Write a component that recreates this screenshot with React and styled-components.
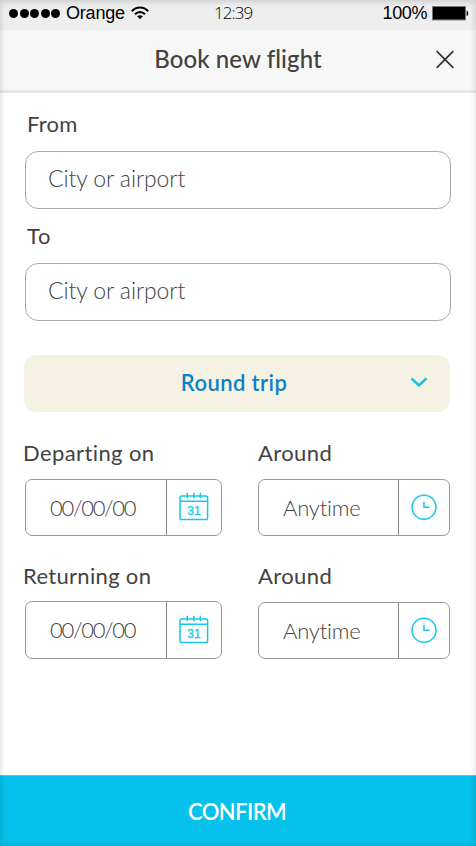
import React from "react";
import styled, { createGlobalStyle } from "styled-components";

const CalendarIcon = () => (
  <Icon width="30" height="30" viewBox="0 0 30 30">
    <rect x="1" y="4" width="27.6" height="23.6" rx="1.8" />
    <path d="M1 9.2h27.6M8.3 .8v5.4M14.8 .8v5.4M21.4 .8v5.4" />
    <IconText x="14.9" y="22.6">31</IconText>
  </Icon>
);

const ClockIcon = () => (
  <Icon width="26" height="26" viewBox="0 0 26 26">
    <circle cx="13" cy="13.3" r="12" />
    <path d="M13 7.7v5.5h5.4" />
  </Icon>
);

const WifiIcon = () => (
  <svg width="18" height="14" viewBox="0 0 18 14" fill="none" stroke="#000" strokeWidth="2">
    <path d="M.8 5.2C5.4 .2 12.6 .2 17.2 5.2" />
    <path d="M4 8.3c3-3.1 7-3.1 10 0" />
    <path d="M9 13.3l-2.9-3c1.8-1.5 4-1.5 5.8 0z" fill="#000" stroke="none" />
  </svg>
);

const BatteryIcon = () => (
  <svg width="37" height="15" viewBox="0 0 37 15">
    <rect x=".5" y=".5" width="33" height="13.4" fill="#000" stroke="#777" />
    <path d="M34.6 4.4c2.3 1 2.3 4.8 0 5.8z" fill="#000" />
  </svg>
);

const DateField = ({ label, spacing, fieldHeight }) => (
  <div>
    <Label $height={109 - fieldHeight} $spacing={spacing} $inset={-2}>{label}</Label>
    <SplitField $height={fieldHeight}>
      <SplitValue $spacing="-1.3px">00/00/00</SplitValue>
      <IconCell $width={55} aria-label="Open calendar">
        <CalendarIcon />
      </IconCell>
    </SplitField>
  </div>
);

const TimeField = () => (
  <div>
    <Label $height={52} $spacing="0.4px" $inset={0}>Around</Label>
    <SplitField $height={57}>
      <SplitValue $spacing="-0.2px">Anytime</SplitValue>
      <IconCell $width={51} aria-label="Choose time">
        <ClockIcon />
      </IconCell>
    </SplitField>
  </div>
);

const App = () => (
  <>
    <GlobalStyle />
    <Screen>
      <StatusBar>
        <Carrier>
          <Signal>
            {[0, 1, 2, 3, 4].map((i) => <Dot key={i} />)}
          </Signal>
          <CarrierName>Orange</CarrierName>
          <WifiIcon />
        </Carrier>
        <Time>12:39</Time>
        <Battery>
          <span>100%</span>
          <BatteryIcon />
        </Battery>
      </StatusBar>

      <Header>
        <Title>Book new flight</Title>
        <CloseButton aria-label="Close">
          <svg width="20" height="20" viewBox="0 0 20 20" stroke="#333" strokeWidth="1.7">
            <path d="M1.7 1.2l16.6 16.6M18.3 1.2L1.7 17.8" />
          </svg>
        </CloseButton>
      </Header>

      <Form>
        <Label $height={54} $spacing="0.2px" $inset={2}>From</Label>
        <Field>City or airport</Field>
        <Label $height={54} $spacing="0.8px" $inset={2}>To</Label>
        <Field>City or airport</Field>

        <TripSelect>
          <span>Round trip</span>
          <svg width="18" height="12" viewBox="0 0 18 12" fill="none" stroke="#05c3e8" strokeWidth="2.4">
            <path d="M1.5 2.3L9 9.3l7.5-7" />
          </svg>
        </TripSelect>

        <Schedule>
          <DateField label="Departing on" spacing="0.4px" fieldHeight={57} />
          <TimeField />
          <DateField label="Returning on" spacing="0.32px" fieldHeight={58} />
          <TimeField />
        </Schedule>
      </Form>

      <ConfirmButton>CONFIRM</ConfirmButton>
    </Screen>
  </>
);

export default App;

const GlobalStyle = createGlobalStyle`
  * {
    box-sizing: border-box;
  }

  body {
    margin: 0;
    background: #ffffff;
    font-family: Lato, "Open Sans", sans-serif;
    font-variant-ligatures: none;
    color: #424242;
  }

  button {
    font-family: inherit;
    border: none;
    padding: 0;
    background: none;
    cursor: pointer;
  }

  svg {
    display: block;
    flex-shrink: 0;
  }
`;

const Screen = styled.div`
  position: relative;
  display: flex;
  flex-direction: column;
  width: 476px;
  height: 846px;
  overflow: hidden;

  /* soft edge shade over the whole screen */
  &::after {
    content: "";
    position: absolute;
    inset: 0;
    pointer-events: none;
    box-shadow: inset 0 1px 6px rgba(0, 0, 0, 0.18);
  }
`;

const StatusBar = styled.div`
  display: grid;
  grid-template-columns: 205px 1fr auto;
  align-items: center;
  height: 30px;
  padding: 0 7px 4px 9px;
  background: #eeeeee;
  font-family: "Liberation Sans", Arial, sans-serif;
  font-size: 18px;
  line-height: 26px;
  color: #000000;
`;

const Carrier = styled.div`
  display: flex;
  align-items: center;
  gap: 6px;
`;

const CarrierName = styled.span`
  letter-spacing: -0.2px;
`;

const Signal = styled.div`
  display: flex;
  gap: 1.5px;
`;

const Dot = styled.i`
  width: 9px;
  height: 9px;
  border-radius: 50%;
  background: #000000;
`;

const Time = styled.span`
  font-family: "Open Sans", sans-serif;
  font-size: 17px;
  font-weight: 300;
  letter-spacing: -0.9px;
  color: #000000;
`;

const Battery = styled.div`
  display: flex;
  justify-content: flex-end;
  align-items: center;
  gap: 5px;
  letter-spacing: -0.4px;
`;

const Header = styled.header`
  display: grid;
  grid-template-columns: 44px 1fr 44px;
  align-items: center;
  height: 63px;
  padding: 0 9px 0 8px;
  background: #f7f7f7;
  border-bottom: 3px solid #e6e6e6;
`;

const Title = styled.h1`
  grid-column: 2;
  margin: 0;
  padding: 0 0 3px 1px;
  font-size: 24px;
  font-weight: 500;
  line-height: 30px;
  letter-spacing: 0.1px;
  text-align: center;
`;

const CloseButton = styled.button`
  display: flex;
  justify-content: center;
`;

const Form = styled.main`
  flex: 1;
  padding: 4px 25px 0;
`;

const Label = styled.div`
  height: ${(props) => props.$height}px;
  padding-left: ${(props) => Math.max(props.$inset, 0)}px;
  margin-left: ${(props) => Math.min(props.$inset, 0)}px;
  font-size: 22px;
  line-height: ${(props) => props.$height}px;
  letter-spacing: ${(props) => props.$spacing};
  white-space: nowrap;
`;

const Field = styled.div`
  height: 58px;
  padding-left: 22px;
  border: 1px solid #a9a9a9;
  border-radius: 13px;
  font-size: 23px;
  font-weight: 300;
  line-height: 53px;
  letter-spacing: -0.08px;
`;

const TripSelect = styled.button`
  display: grid;
  grid-template-columns: 62px 1fr 62px;
  align-items: center;
  justify-items: center;
  width: 426px;
  height: 57px;
  margin: 34px 0 15px -1px;
  padding-bottom: 3px;
  border-radius: 12px;
  background: #f6f2e3;
  font-size: 22px;
  font-weight: 600;
  color: #0a82c6;

  span {
    grid-column: 2;
    padding-right: 6px;
    letter-spacing: 0.4px;
  }
`;

const Schedule = styled.div`
  display: grid;
  grid-template-columns: 197px 192px;
  column-gap: 36px;
  row-gap: 14px;
`;

const SplitField = styled.div`
  display: flex;
  height: ${(props) => props.$height}px;
  border: 1px solid #999999;
  border-radius: 7px;
`;

const SplitValue = styled.div`
  flex: 1;
  padding-left: 24px;
  font-size: 22px;
  font-weight: 300;
  line-height: 56px;
  letter-spacing: ${(props) => props.$spacing};
`;

const IconCell = styled.button`
  display: flex;
  align-items: center;
  justify-content: center;
  width: ${(props) => props.$width}px;
  padding-bottom: 1px;
  border-left: 1px solid #858585;
`;

const Icon = styled.svg`
  fill: none;
  stroke: #14c8ec;
  stroke-width: 1.5;
`;

const IconText = styled.text`
  fill: #14c8ec;
  stroke: #14c8ec;
  stroke-width: 0.3;
  font-family: "Liberation Sans", Arial, sans-serif;
  font-size: 12px;
  text-anchor: middle;
`;

const ConfirmButton = styled.button`
  height: 71px;
  padding: 0 2px 0 0;
  background: #05c1eb;
  border-top: 1px solid #3fcff0;
  font-size: 22px;
  font-weight: 600;
  letter-spacing: -0.6px;
  color: #ffffff;
`;
